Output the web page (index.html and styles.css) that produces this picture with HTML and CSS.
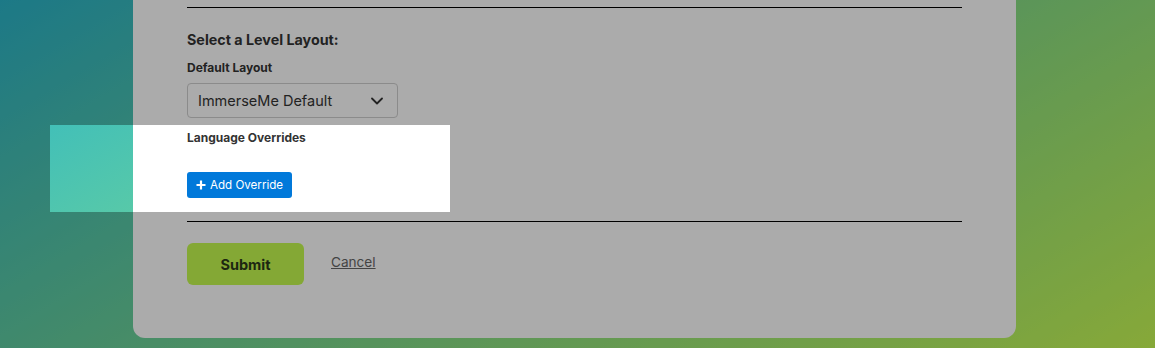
FILE: index.html
```html
<!DOCTYPE html>
<html lang="en">
<head>
  <meta charset="UTF-8">
  <meta name="viewport" content="width=device-width, initial-scale=1.0">
  <title>Edit Level</title>
  <link rel="stylesheet" href="styles.css">
</head>
<body>
  <div class="page">
    <div class="card">
      <div class="layout-section">
        <h3 class="section-title">Select a Level Layout:</h3>

        <label class="field-label" for="default-layout">Default Layout</label>
        <div class="select-wrap">
          <select id="default-layout" class="select">
            <option>ImmerseMe Default</option>
          </select>
          <svg class="chevron" width="12" height="8" viewBox="0 0 12 8" aria-hidden="true">
            <polyline points="1,1.5 6,6.5 11,1.5" fill="none" stroke="#333" stroke-width="1.8" stroke-linecap="round" stroke-linejoin="round"/>
          </svg>
        </div>

        <div class="field-label overrides-label">Language Overrides</div>
        <button class="btn-add" type="button">
          <svg width="10" height="10" viewBox="0 0 10 10" aria-hidden="true">
            <path d="M5 0.5v9M0.5 5h9" stroke="#fff" stroke-width="2.2"/>
          </svg>
          Add Override
        </button>
      </div>

      <div class="form-actions">
        <button class="btn-submit" type="submit">Submit</button>
        <a class="cancel-link" href="#">Cancel</a>
      </div>
    </div>
  </div>

  <!-- tour spotlight over the overrides block -->
  <div class="tour-spotlight"></div>
</body>
</html>
```

FILE: styles.css
```css
html,
body {
  margin: 0;
  height: 100%;
  overflow: hidden;
}

body {
  font-family: Inter, "Open Sans", sans-serif;
  color: #333;
  background: linear-gradient(149deg, #2bb5c9 0%, #c9fc55 100%);
}

.page {
  padding-left: 133px;
}

.card {
  width: 883px;
  box-sizing: border-box;
  margin-top: -40px;
  padding: 47px 54px 53px;
  background: #fff;
  border-radius: 0 0 12px 12px;
}

.layout-section {
  border-top: 1px solid #000;
  border-bottom: 1px solid #000;
  padding-top: 23px;
  padding-bottom: 23px;
}

.section-title {
  margin: 0;
  font-size: 14.3px;
  line-height: 18px;
  font-weight: 700;
  color: #333;
}

.field-label {
  display: block;
  margin-top: 11px;
  font-size: 12px;
  line-height: 15px;
  font-weight: 700;
  color: #333;
}

.select-wrap {
  position: relative;
  width: 211px;
  margin-top: 8px;
}

.select {
  width: 100%;
  height: 35px;
  padding: 0 30px 0 10px;
  border: 1px solid #cfcfcf;
  border-radius: 4px;
  background: #fff;
  font-family: inherit;
  font-size: 14.5px;
  color: #333;
  appearance: none;
  -webkit-appearance: none;
}

.chevron {
  position: absolute;
  right: 15px;
  top: 14px;
  pointer-events: none;
}

.overrides-label {
  margin-top: 12px;
}

.btn-add {
  display: inline-flex;
  align-items: center;
  gap: 4px;
  margin-top: 27px;
  height: 26px;
  padding: 0 9px;
  border: none;
  border-radius: 3px;
  background: #0179da;
  color: #fff;
  font-family: inherit;
  font-size: 11.6px;
}

.form-actions {
  display: flex;
  align-items: center;
  gap: 27px;
  margin-top: 21px;
}

.btn-submit {
  width: 117px;
  height: 42px;
  border: none;
  border-radius: 6px;
  background: #c5fb4f;
  color: #2d3a1a;
  font-family: inherit;
  font-size: 14.5px;
  font-weight: 700;
}

.cancel-link {
  margin-top: -5px;
  font-size: 13.6px;
  color: #666;
  text-decoration: underline;
}

.tour-spotlight {
  position: absolute;
  left: 50px;
  top: 125px;
  width: 400px;
  height: 87px;
  box-shadow: 0 0 0 3000px rgba(0, 0, 0, 0.33);
  pointer-events: none;
}
```
